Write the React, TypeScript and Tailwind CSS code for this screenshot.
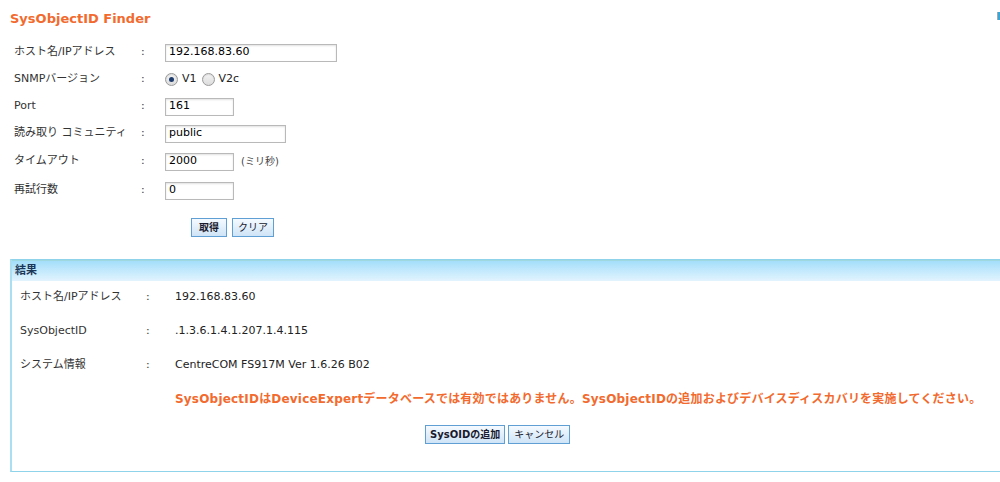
import React from "react";

const formRows = [
  { label: "ホスト名/IPアドレス", kind: "text", value: "192.168.83.60", w: "w-[172px]" },
  { label: "SNMPバージョン", kind: "radio" },
  { label: "Port", kind: "text", value: "161", w: "w-[69px]" },
  { label: "読み取り コミュニティ", kind: "text", value: "public", w: "w-[121px]" },
  { label: "タイムアウト", kind: "text", value: "2000", w: "w-[69px]", note: "(ミリ秒)" },
  { label: "再試行数", kind: "text", value: "0", w: "w-[69px]" },
];

const results = [
  { label: "ホスト名/IPアドレス", value: "192.168.83.60" },
  { label: "SysObjectID", value: ".1.3.6.1.4.1.207.1.4.115" },
  { label: "システム情報", value: "CentreCOM FS917M Ver 1.6.26 B02" },
];

function Radio({ checked, label }: { checked?: boolean; label: string }) {
  return (
    <label className="flex items-center gap-[4px] mr-[5px]">
      <span className="w-[13px] h-[13px] rounded-full border border-[#9a9a9a] bg-gradient-to-b from-[#f4f4f4] to-[#dcdcdc] flex items-center justify-center shadow-[inset_0_1px_1px_rgba(0,0,0,0.1)]">
        {checked && <span className="w-[5px] h-[5px] rounded-full bg-[#1f3c6e]" />}
      </span>
      <span className="text-[#222]">{label}</span>
    </label>
  );
}

function Btn({ children, bold, px }: { children: React.ReactNode; bold?: boolean; px: string }) {
  return (
    <button
      className={`h-[19px] ${px} border border-[#5f9fd4] bg-gradient-to-b from-[#f5faff] to-[#cfe4f7] text-[10px] leading-none text-[#1a1a2e] ${
        bold ? "font-bold" : "font-normal"
      }`}
    >
      {children}
    </button>
  );
}

export default function App() {
  return (
    <div className="relative w-[1000px] h-[482px] overflow-hidden bg-white text-[11px] text-[#333] font-['DejaVu_Sans','Noto_Sans_CJK_JP',sans-serif]">
      <div className="absolute right-0 top-[12px] w-[3px] h-[8px] bg-[#3aa6d6] border-l border-[#aaa]" />

      <div className="h-[38px] pl-[10px] pt-[9px] text-[13px] font-bold text-[#f26a2e]">SysObjectID Finder</div>

      <div className="pl-[14px]">
        {formRows.map((r, i) => (
          <div key={i} className={`flex items-center h-[27px] ${i === 0 ? "mt-[1px]" : ""} ${i === 4 ? "mt-[1px]" : ""} ${i === 5 ? "mt-[2px]" : ""}`}>
            <div className="w-[127px]">{r.label}</div>
            <div className="w-[24px]">:</div>
            {r.kind === "radio" ? (
              <div className="flex items-center">
                <Radio checked label="V1" />
                <Radio label="V2c" />
              </div>
            ) : (
              <div className="flex items-center">
                <div
                  className={`${r.w} h-[18px] border border-[#b9b9b9] shadow-[inset_0_1px_2px_rgba(0,0,0,0.12)] pl-[3px] flex items-center text-[11px] text-black`}
                >
                  {r.value}
                </div>
                {r.note && <span className="ml-[7px] text-[10px] text-[#444]">{r.note}</span>}
              </div>
            )}
          </div>
        ))}

        <div className="flex gap-[5px] ml-[177px] mt-[14px]">
          <Btn bold px="px-[7px]">取得</Btn>
          <Btn px="px-[5px]">クリア</Btn>
        </div>
      </div>

      <div className="ml-[10px] mt-[22px] w-[1000px] h-[213px] border border-[#8fd3ea] border-l-2 border-l-[#a9dff0]">
        <div className="h-[21px] pl-[3px] flex items-center border-t border-[#9fd8de] bg-gradient-to-b from-[#a3defa] to-[#e2f4fe] font-bold text-[#1c3658]">
          結果
        </div>
        <div className="pl-[8px] -mt-[1px]">
          {results.map((r, i) => (
            <div key={i} className="flex items-center h-[34px]">
              <div className="w-[126px]">{r.label}</div>
              <div className="w-[29px]">:</div>
              <div className="text-[#222]">{r.value}</div>
            </div>
          ))}
          <div className="flex items-center h-[34px] pl-[155px] text-[12px] font-bold text-[#f26a2e] tracking-[0.2px]">
            SysObjectIDはDeviceExpertデータベースでは有効ではありません。SysObjectIDの追加およびデバイスディスカバリを実施してください。
          </div>
          <div className="flex gap-[3px] ml-[405px] mt-[9px]">
            <Btn bold px="px-[4px]">SysOIDの追加</Btn>
            <Btn px="px-[5px]">キャンセル</Btn>
          </div>
        </div>
      </div>
    </div>
  );
}
